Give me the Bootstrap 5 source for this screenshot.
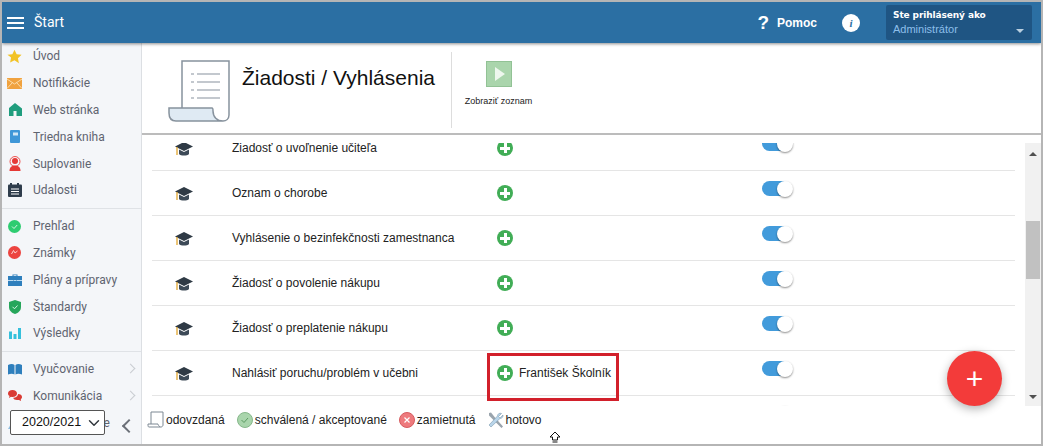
<!DOCTYPE html>
<html lang="sk">
<head>
    <meta charset="UTF-8">
    <title>Žiadosti / Vyhlásenia</title>
    <link href="https://cdn.jsdelivr.net/npm/bootstrap@5.3.0/dist/css/bootstrap.min.css" rel="stylesheet">
    <script src="https://cdn.jsdelivr.net/npm/bootstrap@5.3.0/dist/js/bootstrap.bundle.min.js"></script>
    <style>
        html, body { height: 100%; overflow: hidden; }
        body { font-family: "Liberation Sans", Arial, sans-serif; font-size: 12px; color: #222; background: #fff; }
        .app-frame { height: 446px; border: 2px solid #b5b5b5; position: relative; overflow: hidden; }
        .top-bar { height: 41px; background: #2b6fa3; color: #fff; box-shadow: 0 1px 3px rgba(0,0,0,.45); position: relative; z-index: 3; flex: none; }
        .burger { width: 17px; height: 12px; margin-left: 5px; margin-right: 10px; display: flex; flex-direction: column; justify-content: space-between; }
        .burger span { display: block; height: 2px; background: #fff; }
        .top-title { font-family: Roboto, sans-serif; font-size: 14px; }
        .help-mark { font-size: 19px; font-weight: 700; margin-right: 8px; line-height: 1; }
        .help-text { font-size: 12px; font-weight: 700; margin-right: 25px; }
        .info-dot { width: 18px; height: 18px; border-radius: 50%; background: #fff; color: #2b6fa3; font: italic 700 11px "Liberation Serif", serif; margin-right: 26px; }
        .user-box { width: 146px; height: 35px; background: #1f5583; border-radius: 2px; margin-right: 9px; padding: 4px 7px; position: relative; }
        .user-top { font-family: "DejaVu Sans", sans-serif; font-size: 9px; font-weight: 700; line-height: 13px; letter-spacing: -.1px; }
        .user-role { font-size: 11px; color: #8dbfea; line-height: 14px; }
        .user-caret { position: absolute; right: 8px; top: 24px; border: 4px solid transparent; border-top-color: #b9cfe0; }

        .side-menu { width: 140px; background: #f4f6f9; border-right: 1px solid #dcdfe3; flex: none; position: relative; overflow: hidden; color: #5f6470; font-family: Roboto, sans-serif; font-size: 12px; }
        .side-item { height: 26.8px; display: flex; align-items: center; position: relative; }
        .side-icon { width: 31px; display: flex; justify-content: center; padding-right: 6px; flex: none; }
        .side-line { border-top: 1px solid #dfe2e6; margin: 4px 0 4px; }
        .side-arrow { position: absolute; right: 7px; top: 9px; width: 7px; height: 7px; border-top: 1px solid #c9ccd1; border-right: 1px solid #c9ccd1; transform: rotate(45deg); }
        .year-pick { position: absolute; left: 8px; top: 367px; width: 95px; height: 25px; font-size: 12.5px; padding: 0 0 0 11px; border: 1px solid #555; border-radius: 2px; background-color: #fff; background-position: right 3px center; background-size: 14px 12px; color: #111; font-family: "Liberation Sans", sans-serif; }
        .side-back { position: absolute; left: 122px; top: 378px; width: 10px; height: 10px; border-left: 2px solid #6b7078; border-bottom: 2px solid #6b7078; transform: rotate(45deg); }

        .page-head { height: 92px; flex: none; border-bottom: 2px solid #bcbcbc; position: relative; z-index: 2; background: #fff; padding-top: 9px; }
        .doc-pic { margin-left: 26px; margin-top: 8px; flex: none; }
        .page-title { font-size: 21px; margin: 13px 0 0 12px; width: 209px; font-weight: 400; color: #111; white-space: nowrap; }
        .head-tool { border-left: 1px solid #ddd; height: 76px; width: 94px; text-align: center; font-size: 9px; }
        .head-tool svg { display: block; margin: 9px auto 8px; }

        .list-wrap { flex: 1 1 auto; min-height: 0; position: relative; padding-top: 8px; }
        .list-scroll { height: 263px; overflow: hidden; margin-left: 10px; margin-right: 12px; }
        .list-inner { margin-top: -17px; }
        .req-row { height: 45px; border-bottom: 1px solid #e5e5e5; position: relative; width: 863px; }
        .req-cap { width: 80px; padding-left: 23px; flex: none; padding-top: 2px; }
        .req-name { width: 265px; flex: none; }
        .req-add { width: 265px; flex: none; }
        .req-add span { margin-left: 6px; }
        .plus-dot { width: 16px; height: 16px; border-radius: 50%; background: #41ad56; position: relative; flex: none; }
        .plus-dot::before { content: ""; position: absolute; left: 3px; top: 6.5px; width: 10px; height: 3px; background: #fff; }
        .plus-dot::after { content: ""; position: absolute; left: 6.5px; top: 3px; width: 3px; height: 10px; background: #fff; }
        .sw-track { width: 28px; height: 15px; background: #429bdb; border-radius: 8px; position: relative; margin-top: -9px; }
        .sw-track::after { content: ""; position: absolute; right: -3px; top: -.5px; width: 16px; height: 16px; border-radius: 50%; background: #fff; box-shadow: 0 1px 2px rgba(0,0,0,.45); }
        .mark-box { position: absolute; left: 335px; top: 2px; width: 132px; height: 48px; border: 3px solid #d2202b; z-index: 1; }
        .bar-track { position: absolute; left: 883px; top: 8px; width: 16px; height: 263px; background: #f1f1f1; }
        .bar-thumb { position: absolute; left: 1px; top: 78px; width: 14px; height: 58px; background: #c1c1c1; }
        .bar-up, .bar-down { position: absolute; left: 4px; border: 4px solid transparent; }
        .bar-up { top: 5px; border-bottom-color: #505050; }
        .bar-down { bottom: 3px; border-top-color: #505050; }
        .fab-add { position: absolute; width: 55px; height: 55px; border-radius: 50%; background: #f33b3a; color: #fff; right: 39px; bottom: 38px; font-size: 30px; line-height: 1; box-shadow: 0 3px 10px rgba(0,0,0,.3); z-index: 4; border: 0; padding: 0; }
        .legend-bar { height: 38px; flex: none; padding-left: 5px; padding-bottom: 11px; gap: 12px; background: #fff; color: #222; }
        .legend-bar > div { gap: 2px; }
        .cursor-mark { position: absolute; left: 548px; top: 431px; z-index: 5; }
    </style>
</head>
<body>
<div class="app-frame d-flex flex-column">
    <div class="top-bar d-flex align-items-center">
        <div class="burger"><span></span><span></span><span></span></div>
        <div class="top-title">Štart</div>
        <div class="ms-auto d-flex align-items-center">
            <div class="help-mark">?</div>
            <div class="help-text">Pomoc</div>
            <div class="info-dot d-flex align-items-center justify-content-center">i</div>
            <div class="user-box">
                <div class="user-top">Ste prihlásený ako</div>
                <div class="user-role">Administrátor</div>
                <div class="user-caret"></div>
            </div>
        </div>
    </div>

    <div class="d-flex flex-grow-1" style="min-height:0">
        <div class="side-menu">
            <div class="side-item"><div class="side-icon"><svg width="15" height="15" viewBox="0 0 24 24"><path fill="#f2c325" d="M12 1l3.4 7.3 7.9 1-5.8 5.4 1.5 7.9L12 17.8l-7 3.800 1.500-7.900L.7 9.300l7.900-1z"/></svg></div>Úvod</div>
            <div class="side-item"><div class="side-icon"><svg width="15" height="11" viewBox="0 0 15 11"><rect width="15" height="11" fill="#f0a23f"/><path d="M0 1l7.500 5L15 1M0 10.500l5.500-6M15 10.500l-5.500-6" fill="none" stroke="#fbdca8"/></svg></div>Notifikácie</div>
            <div class="side-item"><div class="side-icon"><svg width="14" height="13" viewBox="0 0 14 13"><path fill="#1f9d7e" d="M7 0l7 5.500V13H8.500V8h-3v5H1V5z"/></svg></div>Web stránka</div>
            <div class="side-item"><div class="side-icon"><svg width="10" height="13" viewBox="0 0 10 13"><rect width="10" height="13" rx="1" fill="#3f97d8"/><rect x="3" y="2.500" width="5" height="3" fill="#cfe6f6"/></svg></div>Triedna kniha</div>
            <div class="side-item"><div class="side-icon"><svg width="14" height="15" viewBox="0 0 14 15"><circle cx="7" cy="5.500" r="5" fill="none" stroke="#ef5350"/><circle cx="7" cy="5" r="3" fill="#e53935"/><path fill="#e53935" d="M1.500 15c0-4 2.500-5.500 5.500-5.500s5.500 1.500 5.500 5.500z"/></svg></div>Suplovanie</div>
            <div class="side-item"><div class="side-icon"><svg width="14" height="14" viewBox="0 0 14 14"><rect y="1.500" width="14" height="12.500" rx="1" fill="#2f3d4c"/><path d="M3 0v3M10 0v3" stroke="#2f3d4c" stroke-width="2"/><path d="M3 6h8M3 8.500h8M3 11h8" stroke="#fff"/></svg></div>Udalosti</div>
            <div class="side-line"></div>
            <div class="side-item"><div class="side-icon"><svg width="13" height="13" viewBox="0 0 13 13"><circle cx="6.500" cy="6.500" r="6.500" fill="#2ecc71"/><path d="M4 6.500l2 2 3.200-3.500" fill="none" stroke="#d6f5e2"/></svg></div>Prehľad</div>
            <div class="side-item"><div class="side-icon"><svg width="13" height="13" viewBox="0 0 13 13"><circle cx="6.500" cy="6.500" r="6.500" fill="#ec4440"/><path d="M3.500 8l2-3.500 1.500 2.500 2.500-2" fill="none" stroke="#fbd0ce"/></svg></div>Známky</div>
            <div class="side-item"><div class="side-icon"><svg width="14" height="12" viewBox="0 0 14 12"><path fill="#2e7fbd" d="M4.500 2V.5h5V2H14v10H0V2zM5.500 2h3v-.7h-3z"/><path d="M0 6.500h5M9 6.500h5M5.500 6.500h3" stroke="#bcdcf2"/></svg></div>Plány a prípravy</div>
            <div class="side-item"><div class="side-icon"><svg width="12" height="14" viewBox="0 0 12 14"><path fill="#26a65b" d="M6 0l6 2v5c0 3.500-2.500 5.800-6 7-3.500-1.200-6-3.500-6-7V2z"/><path d="M3.500 6.800l2 2 3-3.300" fill="none" stroke="#d6f5e2"/></svg></div>Štandardy</div>
            <div class="side-item"><div class="side-icon"><svg width="12" height="11" viewBox="0 0 12 11"><path fill="#35c0dc" d="M0 3.500h3V11H0zM4.500 6h3v5h-3zM9 0h3v11H9z"/></svg></div>Výsledky</div>
            <div class="side-line"></div>
            <div class="side-item"><div class="side-icon"><svg width="14" height="12" viewBox="0 0 14 12"><path fill="#2e7fbd" d="M0 2c2.500-1.500 5-1.500 6.500 0v9.500C5 10.500 2.500 10.500 0 11.500zM14 2c-2.500-1.500-5-1.500-6.500 0v9.500c1.500-1 4-1 6.500 0z"/></svg></div>Vyučovanie<div class="side-arrow"></div></div>
            <div class="side-item"><div class="side-icon"><svg width="14" height="12" viewBox="0 0 14 12"><path fill="#d93b34" d="M0 3.500C0 1.500 1.800 0 4.500 0S9 1.500 9 3.500 7.200 7 4.500 7c-.5 0-1 0-1.500-.2L1 8l.5-2C.5 5.400 0 4.500 0 3.500z"/><path fill="#d93b34" d="M10 4c2.300 0 4 1.300 4 3 0 1-.5 1.700-1.200 2.200L13 11l-2-1H9c-2 0-3.500-1-3.800-2.300C7.500 7.700 10 6.300 10 4z"/></svg></div>Komunikácia<div class="side-arrow"></div></div>
            <div class="side-item"><div class="side-icon"><svg width="14" height="12" viewBox="0 0 14 12"><path fill="#8fbde0" d="M7 0l7 12H0z"/></svg></div>Dokumentácie</div>
            <select class="form-select year-pick"><option>2020/2021</option></select>
            <div class="side-back"></div>
        </div>

        <div class="flex-grow-1 d-flex flex-column" style="min-width:0">
            <div class="page-head d-flex">
                <svg class="doc-pic" width="62" height="62" viewBox="0 0 62 62">
                    <path d="M14 48V1h47v54c0 4-3 6-6 6" fill="#fff" stroke="#87929d" stroke-width="1.500"/>
                    <path d="M1 48h43c1 0 1 1 1 3 0 6 4 10 10 10H8c-5 0-7-3-7-8z" fill="#dfeaf3" stroke="#87929d" stroke-width="1.500"/>
                    <path d="M29 14h23M29 22h23M29 30h23M29 38h23" stroke="#87929d" stroke-width="1.200"/>
                    <path d="M23 14h3M23 22h3M23 30h3M23 38h3" stroke="#87929d" stroke-width="1.200"/>
                </svg>
                <h1 class="page-title">Žiadosti / Vyhlásenia</h1>
                <div class="head-tool">
                    <svg width="26" height="26" viewBox="0 0 26 26"><rect x=".5" y=".5" width="25" height="25" fill="#aad5ac" stroke="#92c295"/><path d="M9 6l10 7-10 7z" fill="#eef7ee"/></svg>
                    Zobraziť zoznam
                </div>
            </div>

            <div class="list-wrap">
                <div class="list-scroll">
                    <div class="list-inner" id="reqList"></div>
                </div>
                <div class="bar-track"><div class="bar-up"></div><div class="bar-thumb"></div><div class="bar-down"></div></div>
            </div>

            <div class="legend-bar d-flex align-items-center">
                <div class="d-flex align-items-center"><svg width="17" height="17" viewBox="0 0 17 17"><path d="M4 13V1h12v13c0 1-1 2-2 2H2c-1 0-1-1-1-3h10c0 1 1 2 2 3" fill="#fff" stroke="#7d8893"/></svg>odovzdaná</div>
                <div class="d-flex align-items-center"><svg width="16" height="16" viewBox="0 0 16 16"><circle cx="8" cy="8" r="7.500" fill="#a9d5ac" stroke="#86b78a"/><path d="M4.500 8l2.500 2.500 4-4.500" fill="none" stroke="#5c9a62"/></svg>schválená / akceptované</div>
                <div class="d-flex align-items-center"><svg width="16" height="16" viewBox="0 0 16 16"><circle cx="8" cy="8" r="7.500" fill="#ee7a7d" stroke="#d65b5f"/><path d="M5.500 5.500l5 5M10.500 5.500l-5 5" stroke="#fff" stroke-width="1.200"/></svg>zamietnutá</div>
                <div class="d-flex align-items-center"><svg width="16" height="16" viewBox="0 0 16 16"><path d="M1 1l2-.5 4 5 8 9-1.500 1.500-8.500-8.500-4-4z" fill="#9aa4ad"/><path d="M15 3l-3 3-1.500-1.500 3-3C11.500.5 9.500 2 9.500 4L1 13l2 2 9-8.500c2 0 3.500-2 3-3.500z" fill="#b9d5ea" stroke="#6d8ca3" stroke-width=".5"/></svg>hotovo</div>
            </div>
        </div>
    </div>

    <button class="fab-add d-flex align-items-center justify-content-center" type="button">+</button>
</div>
<svg class="cursor-mark" width="14" height="14" viewBox="0 0 14 14"><path d="M7 1l5 5H9.500v3h-5V6H2z" fill="#fff" stroke="#111"/><path d="M4.500 11h5" stroke="#111"/></svg>

<script>
    // rows of the table, first is cut by the scroll position, last only shows its switch
    const rows = [
        "Žiadosť o uvoľnenie učiteľa",
        "Oznam o chorobe",
        "Vyhlásenie o bezinfekčnosti zamestnanca",
        "Žiadosť o povolenie nákupu",
        "Žiadosť o preplatenie nákupu",
        "Nahlásiť poruchu/problém v učebni",
        ""
    ];
    const cap = '<svg width="18" height="15" viewBox="0 0 18 15"><path fill="#2f3a45" d="M9 0l9 4.500L9 9 0 4.500z"/><path fill="#3d4a57" d="M4 7.500l5 2.500 5-2.500V12c-1.500 2-8.500 2-10 0z"/><path d="M2 5v8" stroke="#e0a52e" stroke-width="1.300"/></svg>';
    document.getElementById("reqList").innerHTML = rows.map(function(name, i) {
        const who = i === 5 ? '<span>František Školník</span><div class="mark-box"></div>' : '';
        return '<div class="req-row d-flex align-items-center"><div class="req-cap">' + (name ? cap : '') + '</div>'
            + '<div class="req-name">' + name + '</div>'
            + '<div class="req-add d-flex align-items-center">' + (name ? '<div class="plus-dot"></div>' : '') + who + '</div>'
            + '<div class="sw-track"></div></div>';
    }).join("");
</script>
</body>
</html>
